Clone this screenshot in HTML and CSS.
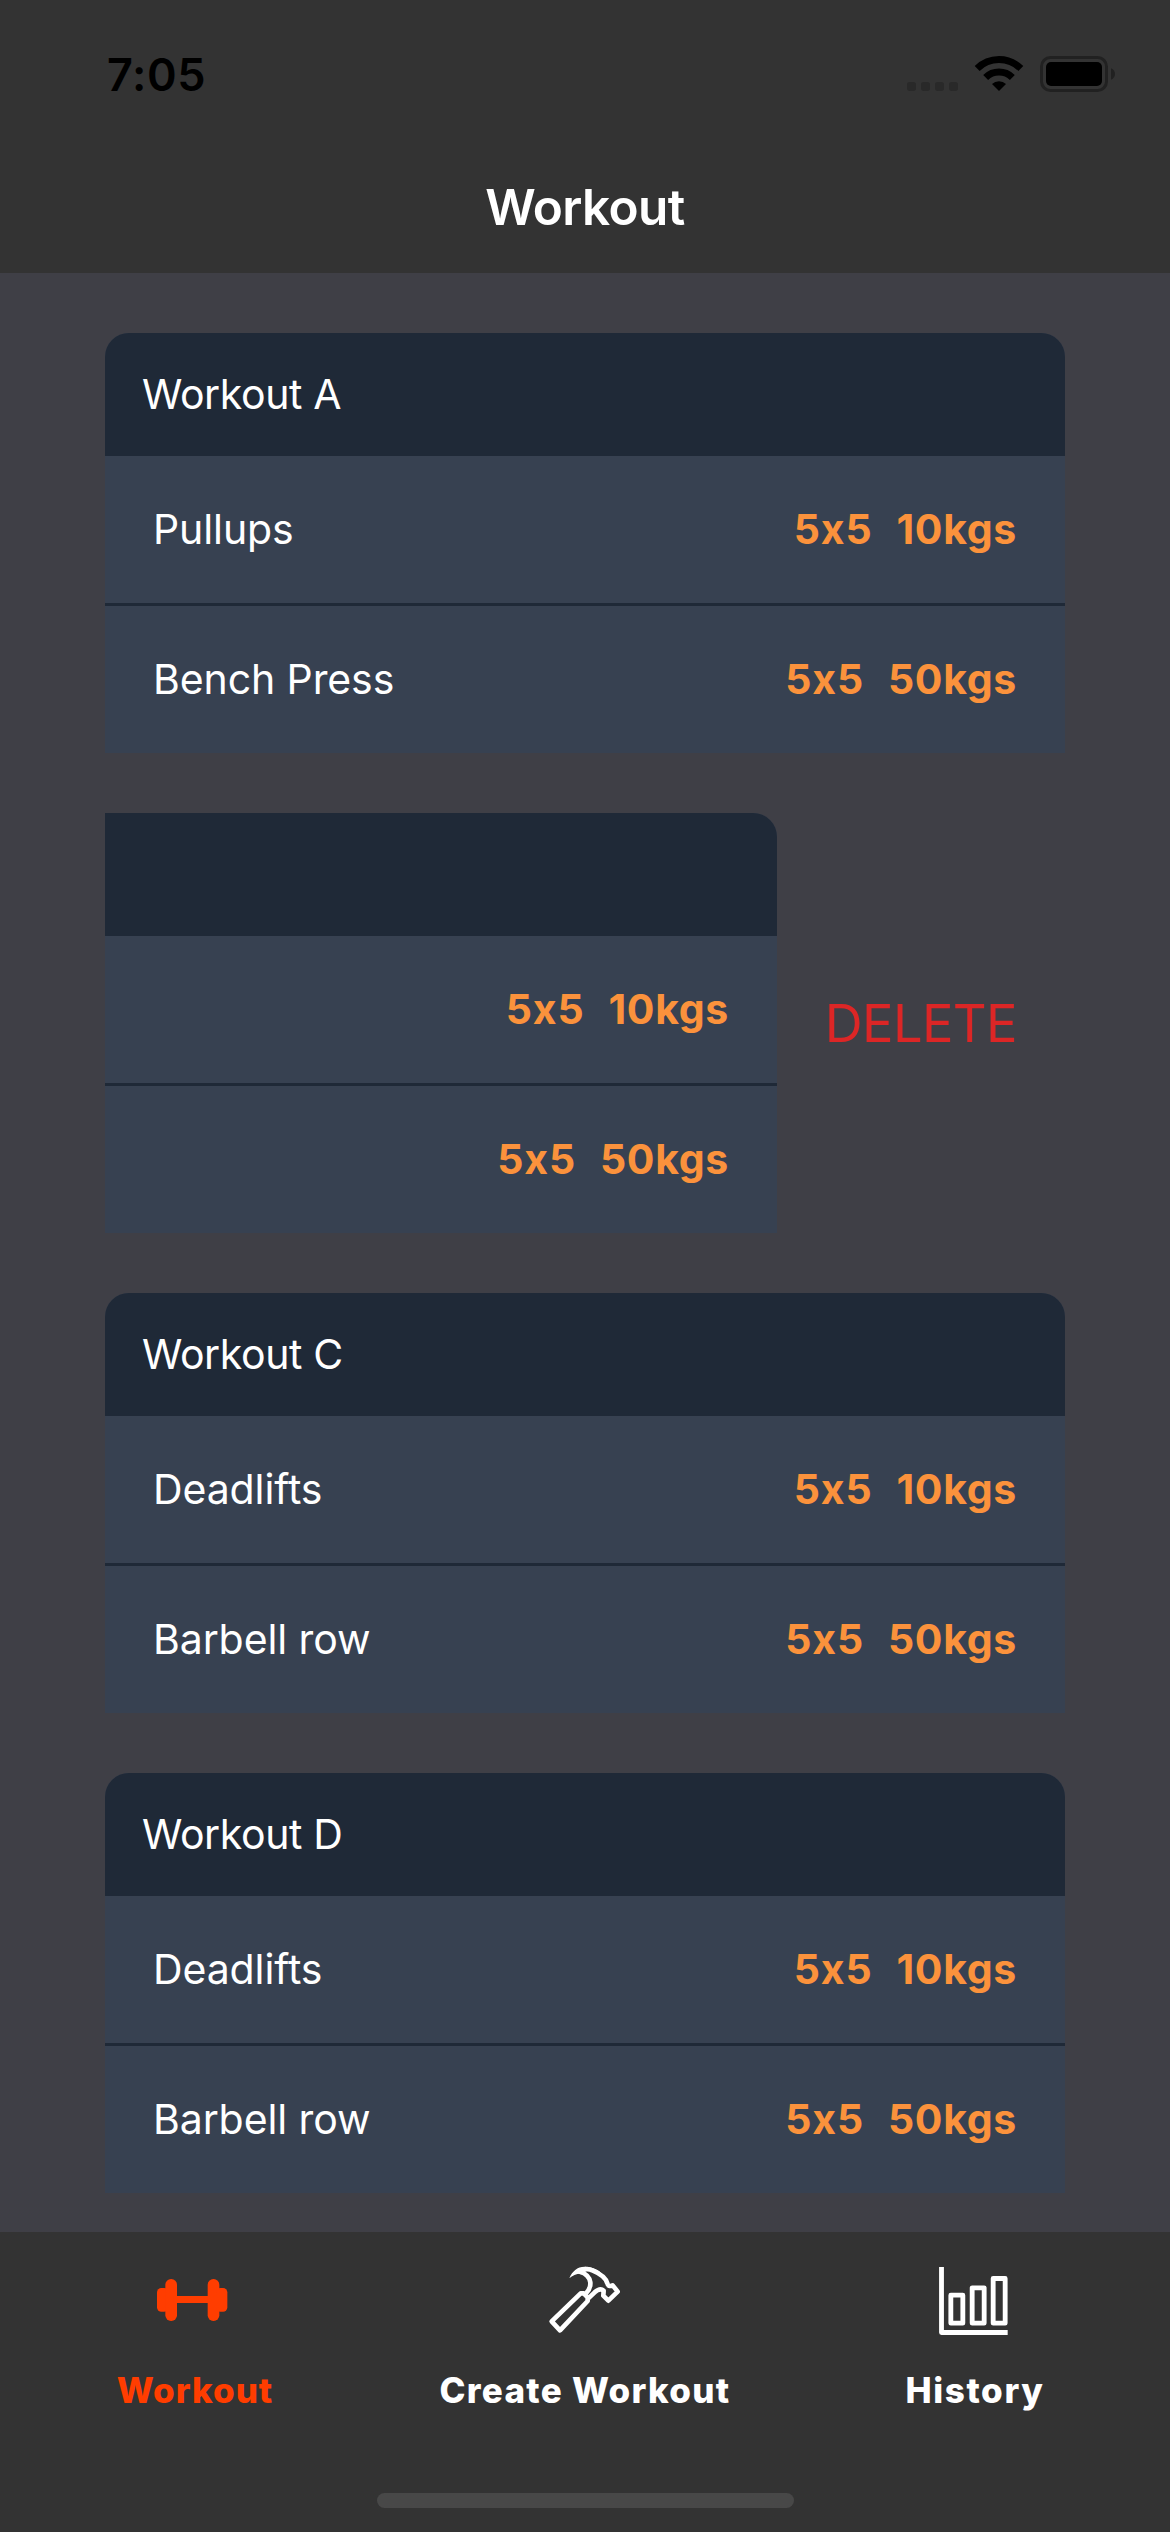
FILE: index.html
```
<!DOCTYPE html>
<html lang="en">
<head>
<meta charset="utf-8">
<title>Workout</title>
<link rel="stylesheet" href="styles.css">
</head>
<body>
<div class="screen">
  <header class="top">
    <div class="status">
      <span class="time">7:05</span>
      <svg class="status-icons" viewBox="69 69 654 132" aria-hidden="true">
        <g fill="#292929">
          <rect x="81" y="156" width="27" height="27" rx="8"/>
          <rect x="123" y="156" width="27" height="27" rx="8"/>
          <rect x="165" y="156" width="27" height="27" rx="8"/>
          <rect x="207" y="156" width="27" height="27" rx="8"/>
        </g>
        <g fill="none" stroke="#000" stroke-width="21">
          <path d="M291.500 115.500A93 93 0 0 1 422.500 115.500"/>
          <path d="M317 142.500A57 57 0 0 1 397 142.500"/>
        </g>
        <path d="M357 183L336 162A30 30 0 0 1 378 162Z"/>
        <rect x="484.500" y="82.500" width="195" height="99" rx="27" fill="none" stroke="#212121" stroke-width="9"/>
        <rect x="498" y="96" width="168" height="72" rx="15"/>
        <path d="M693 115C709 120 709 144 693 149Z" fill="#212121"/>
      </svg>
    </div>
    <h1 class="title">Workout</h1>
  </header>

  <main class="list">
    <section class="card">
      <h2 class="card-head">Workout A</h2>
      <div class="row"><span class="name">Pullups</span><span class="sets">5x5</span><span class="weight">10kgs</span></div>
      <div class="row"><span class="name">Bench Press</span><span class="sets">5x5</span><span class="weight">50kgs</span></div>
    </section>

    <div class="swipe">
      <section class="card card-swiped">
        <div class="card-head"></div>
        <div class="row"><span class="name"></span><span class="sets">5x5</span><span class="weight">10kgs</span></div>
        <div class="row"><span class="name"></span><span class="sets">5x5</span><span class="weight">50kgs</span></div>
      </section>
      <span class="delete">DELETE</span>
    </div>

    <section class="card">
      <h2 class="card-head">Workout C</h2>
      <div class="row"><span class="name">Deadlifts</span><span class="sets">5x5</span><span class="weight">10kgs</span></div>
      <div class="row"><span class="name">Barbell row</span><span class="sets">5x5</span><span class="weight">50kgs</span></div>
    </section>

    <section class="card">
      <h2 class="card-head">Workout D</h2>
      <div class="row"><span class="name">Deadlifts</span><span class="sets">5x5</span><span class="weight">10kgs</span></div>
      <div class="row"><span class="name">Barbell row</span><span class="sets">5x5</span><span class="weight">50kgs</span></div>
    </section>
  </main>

  <footer class="bottom">
    <nav class="tabs">
      <div class="tab tab-active">
        <svg class="tab-icon" viewBox="0 0 270 270" fill="currentColor" aria-hidden="true">
          <rect x="21" y="96" width="34" height="71" rx="13"/>
          <rect x="46" y="69" width="35" height="126" rx="17"/>
          <rect x="70" y="120" width="114" height="21"/>
          <rect x="173" y="69" width="35" height="126" rx="17"/>
          <rect x="198" y="96" width="34" height="71" rx="13"/>
        </svg>
        <span class="tab-label">Workout</span>
      </div>
      <div class="tab">
        <svg class="tab-icon" viewBox="0 0 270 270" fill="none" stroke="currentColor" stroke-width="14" stroke-linejoin="round" aria-hidden="true">
          <path d="M35 196L60 223L143 135V124L131 112H122Z"/>
          <path d="M138 112C149 101 152 92 151 79C149 64 136 51 121 48C128 38 146 37 157 43C181 53 198 66 202 82C203 90 210 92 218 88L233 107L205 134L190 119L191 104C182 96 173 101 164 109L145 127"/>
          <path d="M88 67C97 45 115 30 140 33C160 34 174 42 184 50L150 45L130 43L137 56L122 53C109 53 97 59 88 67Z" fill="currentColor" stroke="none"/>
        </svg>
        <span class="tab-label tab-label-create">Create Workout</span>
      </div>
      <div class="tab">
        <svg class="tab-icon" viewBox="0 0 270 270" fill="none" stroke="currentColor" stroke-width="14.500" stroke-linejoin="round" aria-hidden="true">
          <path d="M34.500 33V229.500H233"/>
          <rect x="62.500" y="117.500" width="36" height="84"/>
          <rect x="126.500" y="95.500" width="36" height="106"/>
          <rect x="189.500" y="67.500" width="36" height="134"/>
        </svg>
        <span class="tab-label tab-label-history">History</span>
      </div>
    </nav>
    <div class="home-indicator"></div>
  </footer>
</div>
</body>
</html>
```
FILE: styles.css
```
* {
  box-sizing: border-box;
}

body {
  margin: 0;
  background: #3f3f46;
  color: #fff;
  font-family: Inter, "Liberation Sans", sans-serif;
}

.screen {
  display: flex;
  flex-direction: column;
  width: 1170px;
  height: 2532px;
  overflow: hidden;
}

.top {
  flex: none;
  height: 273px;
  background: #333;
}

.status {
  display: flex;
  align-items: center;
  justify-content: space-between;
  height: 141px;
  padding: 9px 49px 0 107px;
  color: #000;
}

.time {
  padding-bottom: 2px;
  font-size: 45px;
  font-weight: 600;
  letter-spacing: 0.6px;
}

.status-icons {
  width: 218px;
  height: 44px;
}

.title {
  margin: 0;
  font-size: 49.5px;
  font-weight: 600;
  line-height: 132px;
  letter-spacing: -0.6px;
  text-align: center;
}

.list {
  display: flex;
  flex: 1;
  flex-direction: column;
  gap: 60px;
  min-height: 0;
  padding: 60px 105px 0;
  overflow: hidden;
}

.card {
  flex: none;
  height: 420px;
  overflow: hidden;
  border-radius: 24px 24px 0 0;
  background: #374151;
}

.card-head {
  height: 123px;
  margin: 0;
  padding-left: 37px;
  background: #1f2937;
  font-size: 41px;
  font-weight: 400;
  line-height: 123px;
  letter-spacing: -0.4px;
}

.row {
  display: flex;
  height: 147px;
  padding: 0 48px;
  font-size: 41px;
  line-height: 147px;
}

.row + .row {
  height: 150px;
  border-top: 3px solid #1f2937;
}

.name {
  flex: 1;
  letter-spacing: -0.1px;
}

.sets,
.weight {
  color: #fb923c;
  font-weight: 700;
  font-feature-settings: "calt" 0;
}

.sets {
  margin-right: 24px;
  letter-spacing: 0.8px;
}

.weight {
  letter-spacing: 0.7px;
}

.swipe {
  display: flex;
  flex: none;
  align-items: center;
  justify-content: space-between;
  padding-right: 48px;
}

.card-swiped {
  width: 672px;
  border-top-left-radius: 0;
}

.delete {
  color: #dc2626;
  font-size: 52.5px;
  letter-spacing: -0.66px;
}

.bottom {
  display: flex;
  flex: none;
  flex-direction: column;
  align-items: center;
  justify-content: space-between;
  height: 300px;
  padding: 24px 0;
  background: #333;
}

.tabs {
  display: grid;
  grid-template-columns: repeat(3, 1fr);
  width: 100%;
}

.tab {
  display: flex;
  flex-direction: column;
  gap: 22px;
  align-items: center;
}

.tab-active {
  color: #ff3d00;
}

.tab-icon {
  width: 90px;
  height: 90px;
}

.tab-label {
  font-size: 35px;
  font-weight: 800;
  line-height: 44px;
  letter-spacing: 1px;
}

.tab-label-create {
  letter-spacing: 1.3px;
}

.tab-label-history {
  letter-spacing: 1.6px;
}

.home-indicator {
  width: 417px;
  height: 15px;
  border-radius: 8px;
  background: #484848;
}
```
